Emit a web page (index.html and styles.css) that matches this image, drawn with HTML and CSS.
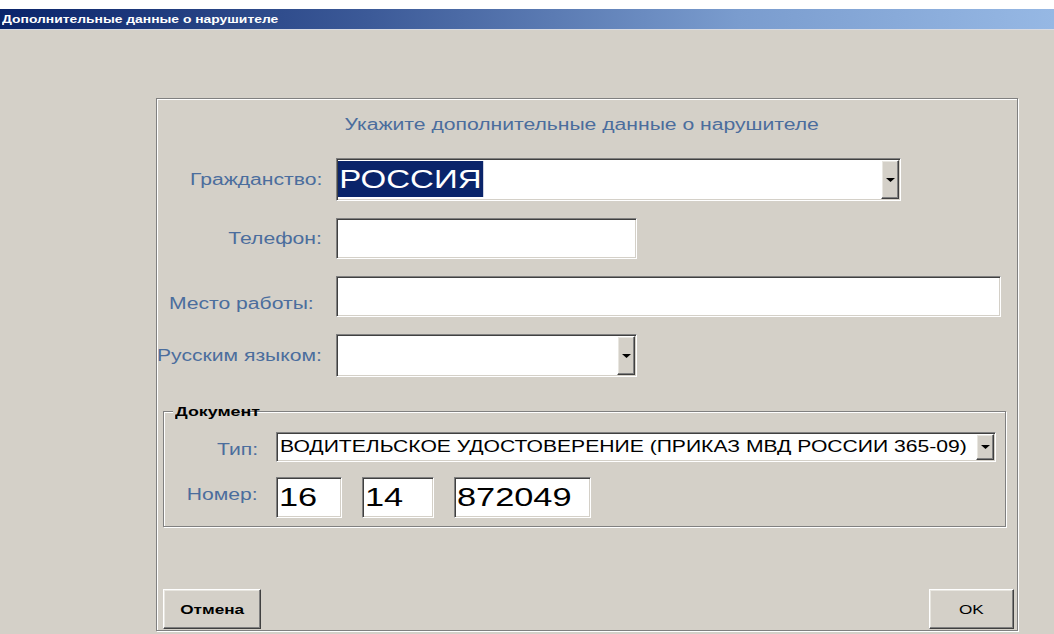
FILE: index.html
```html
<!DOCTYPE html>
<html lang="ru">
<head>
<meta charset="utf-8">
<title>Дополнительные данные о нарушителе</title>
<link rel="stylesheet" href="styles.css">
</head>
<body>
<div class="screen">
  <div class="titlebar"><span class="sx">Дополнительные данные о нарушителе</span></div>
  <div class="client">
    <div class="panel">
      <div class="heading"><span class="sx sx-c">Укажите дополнительные данные о нарушителе</span></div>

      <div class="form">
        <div class="label"><span class="sx sx-r">Гражданство:</span></div>
        <div class="combo sunken w-citizen">
          <div class="combo-value"><span class="sel sx">РОССИЯ</span></div>
          <div class="combo-btn raised"><svg width="9" height="4" viewBox="0 0 9 4"><path d="M0 0H9L4.5 4Z" fill="#000"/></svg></div>
        </div>

        <div class="label"><span class="sx sx-r">Телефон:</span></div>
        <div class="edit sunken w-phone"></div>

        <div class="label label-work"><span class="sx sx-r">Место работы:</span></div>
        <div class="edit sunken w-work"></div>

        <div class="label"><span class="sx sx-r">Русским языком:</span></div>
        <div class="combo sunken w-lang">
          <div class="combo-value"></div>
          <div class="combo-btn raised"><svg width="9" height="4" viewBox="0 0 9 4"><path d="M0 0H9L4.5 4Z" fill="#000"/></svg></div>
        </div>
      </div>

      <div class="group">
        <div class="group-title"><span class="sx">Документ</span></div>
        <div class="doc">
          <div class="label label-type"><span class="sx sx-r">Тип:</span></div>
          <div class="combo sunken w-type">
            <div class="combo-value doc-text"><span class="sx">ВОДИТЕЛЬСКОЕ УДОСТОВЕРЕНИЕ (ПРИКАЗ МВД РОССИИ 365-09)</span></div>
            <div class="combo-btn raised"><svg width="9" height="4" viewBox="0 0 9 4"><path d="M0 0H9L4.5 4Z" fill="#000"/></svg></div>
          </div>

          <div class="label label-num"><span class="sx sx-r">Номер:</span></div>
          <div class="numbers">
            <div class="edit sunken num w-n1"><span class="sx">16</span></div>
            <div class="edit sunken num w-n2"><span class="sx">14</span></div>
            <div class="edit sunken num w-n3"><span class="sx">872049</span></div>
          </div>
        </div>
      </div>

      <div class="buttons">
        <button class="btn raised btn-cancel"><span class="sx sx-c">Отмена</span></button>
        <button class="btn raised btn-ok"><span class="sx sx-c">OK</span></button>
      </div>
    </div>
  </div>
</div>
</body>
</html>
```

FILE: styles.css
```css
* { box-sizing: border-box; }

html, body { margin: 0; }

body {
  width: 1054px;
  height: 634px;
  overflow: hidden;
  background: #d4d0c8;
  font-family: "Liberation Sans", Arial, sans-serif;
}

/* the form is drawn for a 4:3 screen shown wide, so every text run is widened */
.sx {
  display: inline-block;
  transform: scaleX(1.32);
  transform-origin: left center;
  white-space: nowrap;
}
.sx-r { transform-origin: right center; }
.sx-c { transform-origin: center center; }

.screen {
  padding-top: 9px;
  background: #fff;
}

.titlebar {
  height: 21px;
  padding-left: 2px;
  background: linear-gradient(90deg, #0a246a 0%, #3c5a98 35%, #7a9cce 70%, #96b8e4 100%);
  border-bottom: 1px solid #d9dbe2;
  color: #fff;
  font-size: 10.5px;
  font-weight: bold;
  line-height: 20px;
}

.client {
  height: 604px;
  padding: 68px 0 0 156px;
  background: #d4d0c8;
}

/* etched frame around the whole form */
.panel {
  width: 862px;
  height: 533px;
  display: flex;
  flex-direction: column;
  border: 1px solid #808080;
  box-shadow: inset 1px 1px 0 #fff, 1px 1px 0 #fff;
}

.heading {
  padding: 16px 10px 0 0;
  text-align: center;
  font-size: 16px;
  line-height: 20px;
  color: #4b6d9d;
}

.form {
  display: grid;
  grid-template-columns: 165px 1fr;
  column-gap: 14px;
  row-gap: 17px;
  margin-top: 23px;
  justify-items: start;
}

.label {
  justify-self: stretch;
  align-self: center;
  text-align: right;
  font-size: 16px;
  line-height: 18px;
  color: #4b6d9d;
}
.label-work { padding: 15px 8px 0 0; }
.label-type { padding-top: 5px; }
.label-num { padding-bottom: 6px; }

/* sunken 3D edge of edit boxes and combo boxes */
.sunken {
  background: #fff;
  border: 1px solid;
  border-color: #808080 #fff #fff #808080;
  box-shadow: inset 1px 1px 0 #404040, inset -1px -1px 0 #d4d0c8;
}

/* raised 3D edge of buttons */
.raised {
  background: #d4d0c8;
  border: 1px solid;
  border-color: #fff #404040 #404040 #fff;
  box-shadow: inset -1px -1px 0 #808080, inset 1px 1px 0 #e8e6e0;
}

.edit { height: 41px; }

.combo {
  display: flex;
  height: 43px;
}
.combo-value {
  flex: 1;
  padding: 2px 0 0 1px;
  overflow: hidden;
}
.combo-btn {
  width: 18px;
  margin: 1px 1px 1px 0;
  display: flex;
  align-items: center;
  justify-content: center;
}

.sel {
  background: #0a246a;
  color: #fff;
  font-size: 25px;
  line-height: 36px;
  padding: 0 1px;
}

.w-citizen { width: 565px; }
.w-phone { width: 301px; }
.w-work { width: 665px; }
.w-lang { width: 301px; }

.group {
  position: relative;
  margin: 34px 11px 0 6px;
  padding: 20px 0 8px 0;
  border: 1px solid #808080;
  box-shadow: inset 1px 1px 0 #fff, 1px 1px 0 #fff;
}

.group-title {
  position: absolute;
  top: -9px;
  left: 9px;
  padding: 0 2px;
  background: #d4d0c8;
  color: #000;
  font-size: 13.5px;
  font-weight: bold;
  line-height: 17px;
}

.doc {
  display: grid;
  grid-template-columns: 94px 1fr;
  column-gap: 18px;
  row-gap: 15px;
  justify-items: start;
}

.w-type { width: 720px; height: 30px; }
.doc-text {
  padding: 0 0 0 3px;
  font-size: 16px;
  line-height: 28px;
  color: #000;
}

.numbers {
  display: flex;
  gap: 20px;
}
.num {
  padding-left: 2px;
  font-size: 26px;
  line-height: 39px;
  color: #000;
}
.w-n1 { width: 66px; }
.w-n2 { width: 72px; }
.w-n3 { width: 137px; }

.buttons {
  margin-top: auto;
  margin-bottom: 1px;
  padding: 0 3px 0 6px;
  display: flex;
  justify-content: space-between;
}

.btn {
  height: 40px;
  padding: 0;
  font-family: "Liberation Sans", Arial, sans-serif;
  font-size: 13px;
  color: #000;
}
.btn-cancel { width: 98px; font-weight: bold; }
.btn-ok { width: 85px; }
```
